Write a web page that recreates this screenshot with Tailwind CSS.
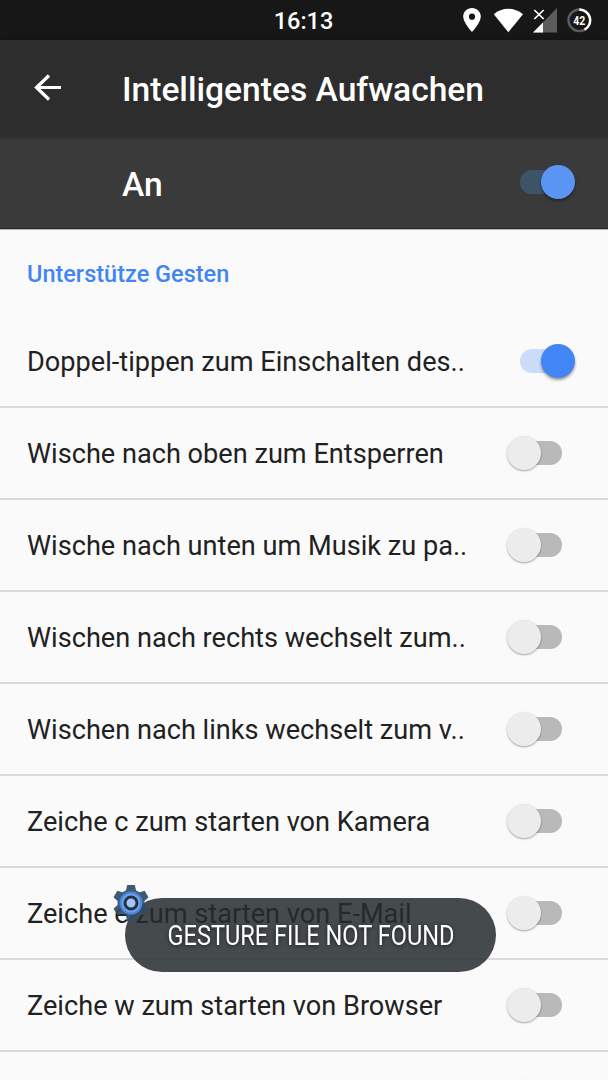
<!DOCTYPE html>
<html lang="de">
<head>
    <meta charset="UTF-8">
    <meta name="viewport" content="width=device-width, initial-scale=1">
    <title>Intelligentes Aufwachen</title>
    <script src="https://cdn.jsdelivr.net/npm/@tailwindcss/browser@4"></script>
</head>
<body class="bg-[#fafafa] font-['Roboto',sans-serif] text-[#212121]">
    <div class="relative flex flex-col w-[608px] h-[1080px] overflow-hidden">
        <!-- Statusleiste -->
        <div class="relative shrink-0 h-10 bg-[#171717] flex items-center justify-end pr-4 text-white">
            <span class="absolute left-0 right-px top-[3px] text-center text-[23.5px] leading-9 font-medium">16:13</span>
            <svg class="w-[130px] h-10" viewBox="0 0 130 40">
                <path fill="#fff" fill-rule="evenodd" d="M10 8c-5 0-8.800 3.800-8.800 8.600C1.200 23 10 32 10 32s8.800-9 8.800-15.400C18.800 11.800 15 8 10 8zm0 5.600a3.100 3.100 0 1 1 0 6.200a3.100 3.100 0 0 1 0-6.200z"/>
                <path fill="#fff" d="M46.300 32.200L31.800 14.200C40 6.800 52.500 6.800 61 14.200z"/>
                <path fill="#5c5c5c" d="M95 8v24.500H71z"/>
                <path fill="#fff" d="M81 22.500v10H71z"/>
                <path stroke="#fff" stroke-width="1.700" d="M72.300 10l9.400 9M81.700 10l-9.400 9"/>
                <circle cx="117.300" cy="20.300" r="10.800" fill="none" stroke="#5c5c5c" stroke-width="2.400"/>
                <path fill="none" stroke="#fff" stroke-width="2.400" d="M117.300 9.500a10.800 10.800 0 0 1 5.200 20.300"/>
                <text x="117.300" y="25.200" fill="#fff" font-size="12.500" font-weight="700" text-anchor="middle" textLength="12" lengthAdjust="spacingAndGlyphs">42</text>
            </svg>
        </div>

        <!-- Titelleiste -->
        <header class="relative z-10 shrink-0 h-24 bg-[#2d2d2d] shadow-[0_1px_5px_rgba(0,0,0,0.3)] flex items-center pl-[34px] text-white">
            <svg class="w-7 h-[27px] mb-0.5" viewBox="0 0 28 27" fill="none" stroke="#fff" stroke-width="3.200">
                <path d="M27 13.500H2.500M15 1.500L2.500 13.500L15 25.500"/>
            </svg>
            <h1 class="ml-[60px] mt-1 text-[33.6px] leading-10 font-medium whitespace-nowrap">Intelligentes Aufwachen</h1>
        </header>

        <!-- Hauptschalter -->
        <div class="shrink-0 h-[93px] bg-[#3a3a3a] border-b border-[#282828] flex items-center justify-between pl-[122px] pr-[33px] text-white">
            <span class="mt-[5px] text-[33.6px] leading-10 font-medium">An</span>
            <div class="w-[68px] h-[34px] flex items-center pl-[13px]">
                <div class="w-[42px] h-6 rounded-full bg-[#3d5468] shrink-0"></div>
                <div class="-ml-[21px] size-[34px] rounded-full bg-[#5a95f3] shadow-[0_2px_3px_rgba(0,0,0,0.4)] shrink-0"></div>
            </div>
        </div>

        <h2 class="shrink-0 h-[87px] border-t border-[#b5b5b5] pl-[27px] pt-[26px] text-[23.5px] leading-9 font-medium text-[#4285f4]">Unterstütze Gesten</h2>

        <ul id="gestures"></ul>

        <!-- Toast -->
        <div class="absolute left-[125px] top-[898px] w-[371px] h-[74px] rounded-full bg-[#242b2e]/85 flex items-center justify-center">
            <svg class="w-[320px] h-10 overflow-visible" viewBox="0 0 320 40">
                <text x="16.500" y="29.500" fill="#fff" font-size="27" textLength="287" lengthAdjust="spacingAndGlyphs" class="drop-shadow-[0_1px_2px_rgba(0,0,0,0.6)]">GESTURE FILE NOT FOUND</text>
            </svg>
        </div>
        <svg class="absolute left-[113px] top-[885px] size-9" viewBox="-18 -18 36 36">
            <g fill="#2f4e68" opacity="0.920">
                <circle r="13.500"/>
                <path id="tooth" d="M-5.200 -12L-3.800 -18H3.800L5.200 -12z"/>
                <use href="#tooth" transform="rotate(60)"/>
                <use href="#tooth" transform="rotate(120)"/>
                <use href="#tooth" transform="rotate(180)"/>
                <use href="#tooth" transform="rotate(240)"/>
                <use href="#tooth" transform="rotate(300)"/>
            </g>
            <circle r="11.500" fill="#4b86dc"/>
            <circle r="9.500" fill="#6aa3f2"/>
            <circle r="6" fill="#a5c8fb" stroke="#263340" stroke-width="3"/>
        </svg>
    </div>

    <script>
        const gestures = [
            ['Doppel-tippen zum Einschalten des..', true],
            ['Wische nach oben zum Entsperren', false],
            ['Wische nach unten um Musik zu pa..', false],
            ['Wischen nach rechts wechselt zum..', false],
            ['Wischen nach links wechselt zum v..', false],
            ['Zeiche c zum starten von Kamera', false],
            ['Zeiche e zum starten von E-Mail', false],
            ['Zeiche w zum starten von Browser', false],
            ['', false],
        ];
        const switchOn = `
            <div class="w-[68px] h-[34px] flex items-center pl-[13px]">
                <div class="w-[42px] h-6 rounded-full bg-[#cbdcf8] shrink-0"></div>
                <div class="-ml-[21px] size-[34px] rounded-full bg-[#4285f4] shadow-[0_2px_3px_rgba(0,0,0,0.4)] shrink-0"></div>
            </div>`;
        const switchOff = `
            <div class="w-[68px] h-[34px] flex items-center">
                <div class="relative z-10 size-[34px] rounded-full bg-[#ececec] shadow-[0_1px_2px_rgba(0,0,0,0.35)] shrink-0"></div>
                <div class="-ml-[21px] w-[42px] h-6 rounded-full bg-[#b9b9b9] shrink-0"></div>
            </div>`;
        document.getElementById('gestures').innerHTML = gestures.map(([label, on]) => `
            <li class="h-[92px] flex items-center justify-between pl-[27px] pr-[33px] border-b-2 border-[#dadada]">
                <span class="mt-px text-[27.15px] leading-8 whitespace-nowrap">${label}</span>
                ${on ? switchOn : switchOff}
            </li>`).join('');
    </script>
</body>
</html>
